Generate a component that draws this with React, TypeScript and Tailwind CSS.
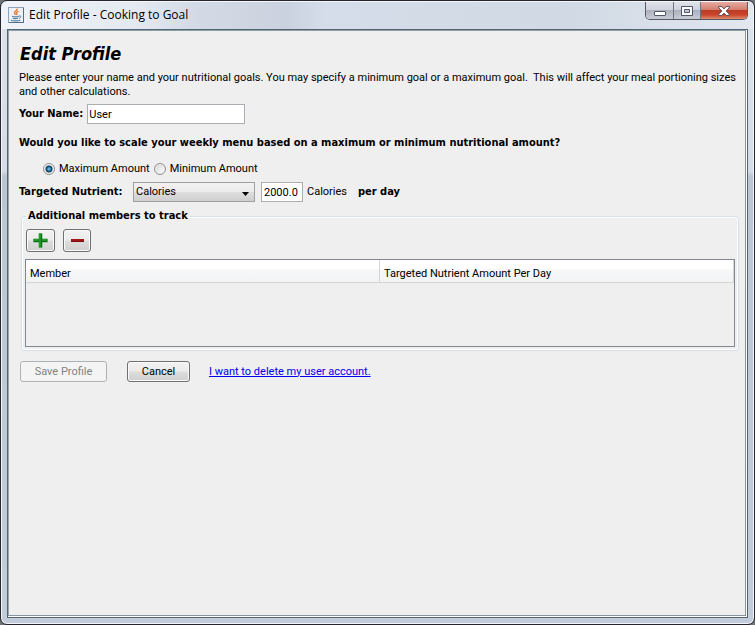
import { useState } from "react";

function JavaIcon() {
  return (
    <svg width="16" height="16" viewBox="0 0 16 16" aria-hidden="true">
      <rect x="0.5" y="0.5" width="15" height="15" fill="#edf1f5" stroke="#8fa3b6" />
      <path d="M1 15.500h14.500V1" fill="none" stroke="#596b7e" />
      <path d="M8.800 1.800c1.400 1.600-3.100 2.700-2.300 4.400.3.700 1 1 1.100 1.700" fill="none" stroke="#e2762a" strokeWidth="1.400" />
      <path d="M10.600 4.300c-1.700.7-2.500 1.400-1.800 2.200.5.600.1 1.100-.4 1.500" fill="none" stroke="#e2762a" strokeWidth="1.200" />
      <path d="M4 9.300c1.600.6 5.200.6 7 0M4.800 11.200c1.500.5 3.900.5 5.300 0M3 13.200c1.800 1 7.400 1 9.400 0" fill="none" stroke="#55809f" strokeWidth="1.200" />
      <path d="M11.200 9c2.300-.6 2.300 1.700-.2 2.400" fill="none" stroke="#55809f" />
    </svg>
  );
}

function TitleBar() {
  return (
    <header className="mx-px mt-px flex h-[27px] items-start justify-between rounded-t-[5px] bg-[linear-gradient(90deg,#f0f3f8_0%,#e4e9f1_18%,#d3dae5_26%,#cbd2df_38%,#d6ddea_43%,#d0d9e4_75%,#e2e7f0_100%)] pl-[6px] pr-[5px]">
      <div className="flex items-center gap-[5px] pt-[5px]">
        <JavaIcon />
        <h1 className="font-['Open_Sans',sans-serif] text-[12px] leading-4 text-black">Edit Profile - Cooking to Goal</h1>
      </div>
      <div className="flex h-[18px] overflow-hidden rounded-b-[5px] border border-t-0 border-[#55596a]">
        <button aria-label="Minimize" className="flex w-7 items-center justify-center border-r border-[#70747f] bg-[linear-gradient(#e0e3ea_0%,#d0d3dc_45%,#adb1bd_50%,#c8ccd6_100%)] pt-[5px]">
          <svg width="12" height="5" viewBox="0 0 12 5"><rect x="0.5" y="0.5" width="11" height="4" rx="0.5" fill="#fff" stroke="#505568" /></svg>
        </button>
        <button aria-label="Maximize" className="flex w-[27px] items-center justify-center border-r border-[#70747f] bg-[linear-gradient(#e0e3ea_0%,#d0d3dc_45%,#adb1bd_50%,#c8ccd6_100%)]">
          <svg width="12" height="10" viewBox="0 0 12 10"><path d="M.5.5h11v9H.5z" fill="#fff" stroke="#505568" /><path d="M3.500 3.500h5v3h-5z" fill="#c4c8d2" stroke="#505568" /></svg>
        </button>
        <button aria-label="Close" className="flex w-[46px] items-center justify-center bg-[linear-gradient(#e5aca2_0%,#d58071_44%,#bd3b25_49%,#c9442b_75%,#df8b6d_100%)]">
          <svg width="12" height="10" viewBox="0 0 12 10"><path d="M.7.6h3.100L6 2.900 8.200.6h3.100v1.200L8.200 5l3.100 3.200v1.200H8.200L6 7.100 3.800 9.400H.7V8.200L3.800 5 .7 1.800z" fill="#fff" stroke="#5a4652" /></svg>
        </button>
      </div>
    </header>
  );
}

function Radio({ label, checked, onChange }: { label: string; checked: boolean; onChange: () => void }) {
  return (
    <label className="flex items-center gap-1">
      <input
        type="radio"
        name="scale"
        checked={checked}
        onChange={onChange}
        className="size-3 appearance-none rounded-full border border-[#8e8f8f] bg-[radial-gradient(circle_at_70%_70%,#f6f6f6_0%,#cfd2d5_100%)] shadow-[inset_0_0_0_1px_#f4f4f4] checked:bg-[radial-gradient(circle,#7fd0f0_0px,#1d6f9e_2px,#0c3350_3px,#dfe3e6_4px)]"
      />
      {label}
    </label>
  );
}

const greyFace = "rounded-[3px] border border-[#707070] bg-[linear-gradient(#f2f2f2_0%,#ebebeb_48%,#dddddd_52%,#cfcfcf_100%)] shadow-[inset_0_0_0_1px_#fafafa]";
const cell = "border-b border-r border-[#d5d5d5] px-1 pb-0 pt-[6px] text-left font-normal";
const bold = "font-['DejaVu_Sans_Condensed','DejaVu_Sans',sans-serif] font-bold";

export default function App() {
  const [scale, setScale] = useState("max");
  return (
    <div className="flex min-h-screen bg-[#6d7478] text-[11px] leading-[14px] text-black">
      <div className="flex flex-1 flex-col rounded-[7px] border border-[#25252b] bg-[linear-gradient(#dde3ec_0px,#d5dce7_170px,#bcc5d4_175px,#c3ccda_100%)] shadow-[inset_0_0_0_1px_#f3f6fa]">
        <TitleBar />
        <div className="mx-[6px] mb-[6px] flex flex-1 border border-[#56646f] bg-white pb-px pr-px">
          <main className="flex-1 border border-b-[#87949c] border-l-[#96a5b0] border-r-[#87949c] border-t-[#8ba0a9] bg-[#efefef] pb-4 pl-[10px] pr-[6px] pt-[13px] font-[Roboto,sans-serif]">
            <h2 className={`pl-px text-[18px] italic leading-5 ${bold}`}>Edit Profile</h2>
            <p className="mt-[7px] whitespace-pre-wrap">
              {"Please enter your name and your nutritional goals. You may specify a minimum goal or a maximum goal.  This will affect your meal portioning sizes and other calculations."}
            </p>
            <div className="mt-[5px] flex items-center gap-1">
              <label htmlFor="name" className={bold}>Your Name:</label>
              <input id="name" defaultValue="User" className="h-5 w-[158px] border border-[#abadb3] bg-white px-px" />
            </div>
            <p className={`mt-3 ${bold}`}>Would you like to scale your weekly menu based on a maximum or minimum nutritional amount?</p>
            <div className="mt-3 flex gap-1 pl-6">
              <Radio label="Maximum Amount" checked={scale === "max"} onChange={() => setScale("max")} />
              <Radio label="Minimum Amount" checked={scale === "min"} onChange={() => setScale("min")} />
            </div>
            <div className="mt-[6px] flex items-center">
              <label htmlFor="nutrient" className={`w-[114px] whitespace-nowrap ${bold}`}>Targeted Nutrient:</label>
              <div className="grid">
                <select id="nutrient" className="col-start-1 row-start-1 h-5 w-[122px] appearance-none border border-[#a0a0a4] bg-[linear-gradient(#f2f2f2_0%,#ebebeb_48%,#dddddd_52%,#cfcfcf_100%)] px-[2px]">
                  <option>Calories</option>
                </select>
                <svg className="pointer-events-none col-start-1 row-start-1 mr-[6px] mt-[3px] self-center justify-self-end" width="7" height="4" viewBox="0 0 7 4"><path d="M0 0h7L3.500 4z" /></svg>
              </div>
              <input aria-label="Target amount" defaultValue="2000.0" className="ml-[6px] h-5 w-[42px] border border-[#abadb3] bg-white px-[2px]" />
              <span className="ml-1 w-[51px]">Calories</span>
              <span className={bold}>per day</span>
            </div>
            <fieldset className="ml-[2px] mt-[7px] min-w-0 rounded-[3px] border border-[#d5dfe5] px-[3px] pb-[3px] shadow-[inset_0_0_0_1px_#fff]">
              <legend className={`ml-[1px] px-[2px] ${bold}`}>Additional members to track</legend>
              <div className="flex gap-2 pl-[1px] pt-[6px]">
                <button aria-label="Add member" className={`flex h-[23px] w-[29px] items-center justify-center ${greyFace}`}>
                  <svg width="15" height="15" viewBox="0 0 15 15"><path d="M6 .5h3v5.500h5.500v3H9v5.500H6V9H.5V6H6z" fill="#1c9622" stroke="#3f9b48" strokeWidth="0.7" /><path d="M8.500 1v13M9 8.500h5M1 8.500h5" stroke="#0b6c12" fill="none" /></svg>
                </button>
                <button aria-label="Remove member" className={`flex h-[23px] w-7 items-center justify-center ${greyFace}`}>
                  <svg width="13" height="3" viewBox="0 0 13 3"><path d="M0 0h13v3H0z" fill="#a31519" /><path d="M0 2.500h13" stroke="#7b0d10" /></svg>
                </button>
              </div>
              <div className="mt-[7px] min-h-[88px] border border-[#828790]">
                <table className="w-full table-fixed border-separate border-spacing-0">
                  <thead>
                    <tr className="h-[23px] bg-[linear-gradient(#fff_0%,#fff_40%,#f7f8fa_41%,#f1f2f4_100%)]">
                      <th scope="col" className={cell}>Member</th>
                      <th scope="col" className={cell}>Targeted Nutrient Amount Per Day</th>
                    </tr>
                  </thead>
                </table>
              </div>
            </fieldset>
            <div className="mt-[10px] flex items-center pl-[1px]">
              <button disabled className="h-[21px] w-[87px] rounded-[3px] border border-[#adb2b5] bg-[#f4f4f4] text-[#838383]">Save Profile</button>
              <button className={`ml-5 h-[21px] w-[63px] ${greyFace}`}>Cancel</button>
              <a href="#delete" className="ml-[19px] text-[#0000ee] underline">I want to delete my user account.</a>
            </div>
          </main>
        </div>
      </div>
    </div>
  );
}
